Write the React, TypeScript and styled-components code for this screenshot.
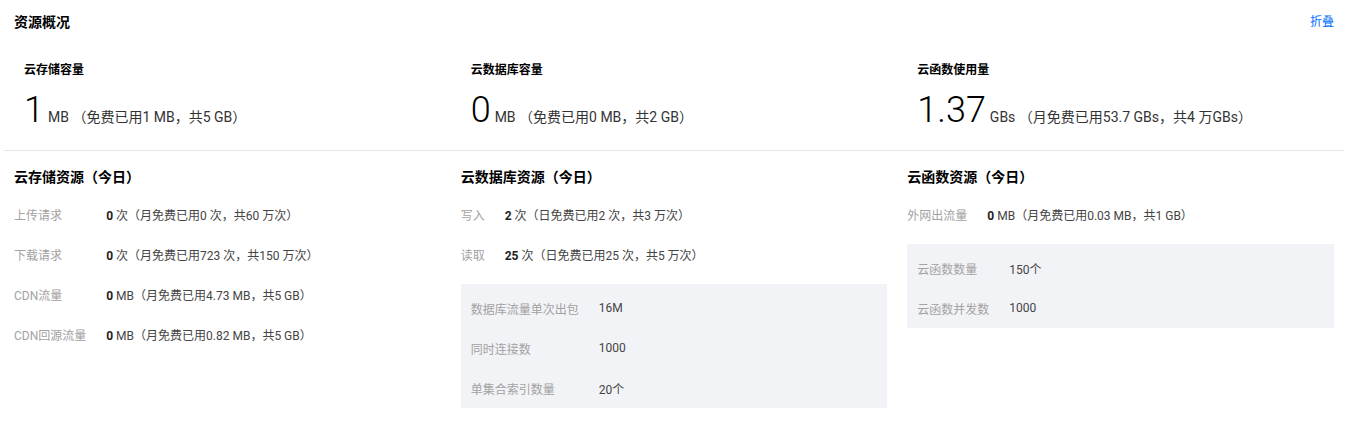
import React from "react";
import styled, { createGlobalStyle } from "styled-components";

const Global = createGlobalStyle`
  html, body { margin: 0; padding: 0; background: #fff; }
  body {
    font-family: Roboto, "Noto Sans CJK SC", "Noto Sans", sans-serif;
    color: #333;
    -webkit-font-smoothing: antialiased;
  }
`;

const Page = styled.div`
  width: 1340px;
  margin-left: 4px;
`;

const Header = styled.div`
  height: 44px;
  padding: 0 10px;
  display: flex;
  align-items: center;
  justify-content: space-between;
`;

const PageTitle = styled.h2`
  margin: 0;
  font-size: 14px;
  font-weight: 700;
  line-height: 20px;
  color: #000;
`;

const FoldLink = styled.a`
  font-size: 12px;
  line-height: 20px;
  color: #006eff;
  cursor: pointer;
  text-decoration: none;
`;

const ThreeCols = styled.div<{ $divider?: boolean }>`
  display: grid;
  grid-template-columns: repeat(3, 1fr);
  column-gap: 20px;
  padding: 16px 10px ${(p) => (p.$divider ? "16px" : "18px")};
  border-top: ${(p) => (p.$divider ? "1px solid #e5e5e5" : "none")};
  align-items: start;
`;

const Card = styled.div`
  padding-left: 10px;
`;

const CardTitle = styled.div`
  font-size: 12px;
  font-weight: 700;
  line-height: 20px;
  color: #000;
`;

const BigRow = styled.div`
  margin-top: 8px;
  display: flex;
  align-items: baseline;
  height: 44px;
`;

const BigNumber = styled.span`
  font-size: 36px;
  line-height: 44px;
  font-weight: 300;
  color: #000;
`;

const Unit = styled.span`
  margin-left: 4px;
  font-size: 14px;
  color: #333;
  white-space: pre;
`;

const SectionTitle = styled.div`
  font-size: 14px;
  font-weight: 700;
  line-height: 20px;
  color: #000;
  margin-bottom: 7px;
`;

const InfoGrid = styled.div<{ $boxed?: boolean }>`
  display: grid;
  grid-template-columns: auto 1fr;
  column-gap: 20px;
  grid-auto-rows: 40px;
  align-items: center;
  background: ${(p) => (p.$boxed ? "#f2f3f7" : "transparent")};
  padding: ${(p) => (p.$boxed ? "4px 10px 0" : "0")};
  margin-top: ${(p) => (p.$boxed ? "10px" : "0")};
`;

const Label = styled.span`
  font-size: 12px;
  color: #a2a2a2;
  white-space: nowrap;
`;

const Value = styled.span`
  font-size: 12px;
  color: #444;
  white-space: nowrap;
`;

const Strong = styled.b`
  font-weight: 700;
  color: #222;
`;

type Row = { label: string; strong?: string; rest: string };

const overview = [
  { title: "云存储容量", num: "1", unit: "MB （免费已用1 MB，共5 GB）" },
  { title: "云数据库容量", num: "0", unit: "MB （免费已用0 MB，共2 GB）" },
  { title: "云函数使用量", num: "1.37", unit: "GBs （月免费已用53.7 GBs，共4 万GBs）" },
];

const sections: { title: string; rows: Row[]; box?: Row[] }[] = [
  {
    title: "云存储资源（今日）",
    rows: [
      { label: "上传请求", strong: "0", rest: " 次（月免费已用0 次，共60 万次）" },
      { label: "下载请求", strong: "0", rest: " 次（月免费已用723 次，共150 万次）" },
      { label: "CDN流量", strong: "0", rest: " MB（月免费已用4.73 MB，共5 GB）" },
      { label: "CDN回源流量", strong: "0", rest: " MB（月免费已用0.82 MB，共5 GB）" },
    ],
  },
  {
    title: "云数据库资源（今日）",
    rows: [
      { label: "写入", strong: "2", rest: " 次（日免费已用2 次，共3 万次）" },
      { label: "读取", strong: "25", rest: " 次（日免费已用25 次，共5 万次）" },
    ],
    box: [
      { label: "数据库流量单次出包", rest: "16M" },
      { label: "同时连接数", rest: "1000" },
      { label: "单集合索引数量", rest: "20个" },
    ],
  },
  {
    title: "云函数资源（今日）",
    rows: [{ label: "外网出流量", strong: "0", rest: " MB（月免费已用0.03 MB，共1 GB）" }],
    box: [
      { label: "云函数数量", rest: "150个" },
      { label: "云函数并发数", rest: "1000" },
    ],
  },
];

const renderRows = (rows: Row[]) =>
  rows.map((r) => (
    <React.Fragment key={r.label}>
      <Label>{r.label}</Label>
      <Value>
        {r.strong && <Strong>{r.strong}</Strong>}
        {r.rest}
      </Value>
    </React.Fragment>
  ));

export default function App() {
  return (
    <>
      <Global />
      <Page>
        <Header>
          <PageTitle>资源概况</PageTitle>
          <FoldLink>折叠</FoldLink>
        </Header>
        <ThreeCols>
          {overview.map((o) => (
            <Card key={o.title}>
              <CardTitle>{o.title}</CardTitle>
              <BigRow>
                <BigNumber>{o.num}</BigNumber>
                <Unit>{o.unit}</Unit>
              </BigRow>
            </Card>
          ))}
        </ThreeCols>
        <ThreeCols $divider>
          {sections.map((s) => (
            <div key={s.title}>
              <SectionTitle>{s.title}</SectionTitle>
              <InfoGrid>{renderRows(s.rows)}</InfoGrid>
              {s.box && <InfoGrid $boxed>{renderRows(s.box)}</InfoGrid>}
            </div>
          ))}
        </ThreeCols>
      </Page>
    </>
  );
}
